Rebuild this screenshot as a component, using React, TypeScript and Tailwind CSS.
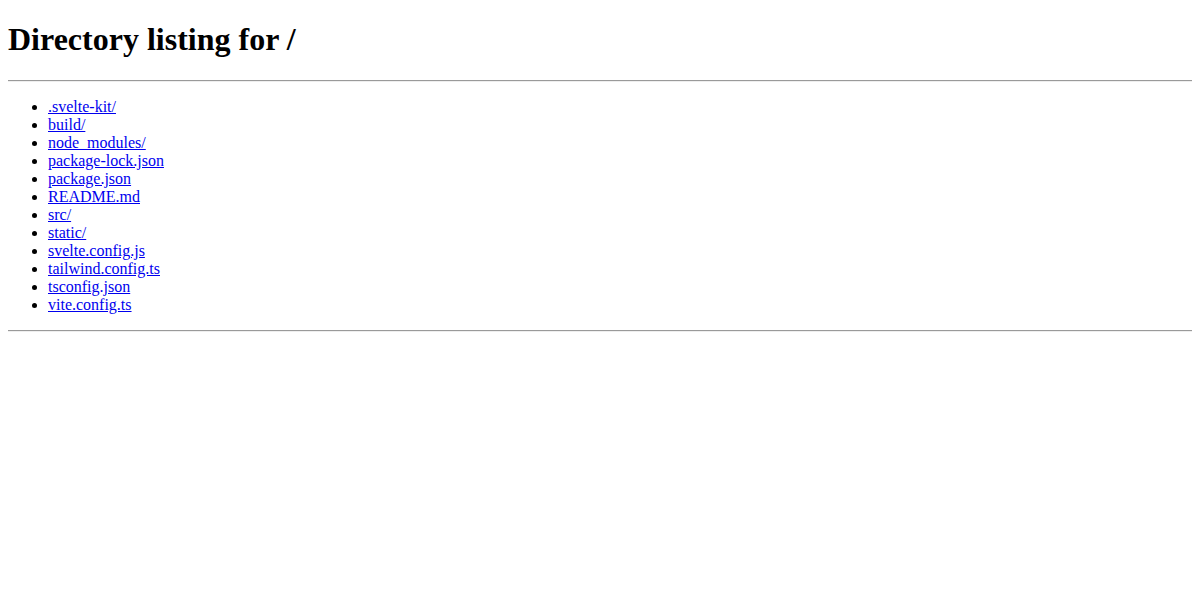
const entries = [
  ".svelte-kit/",
  "build/",
  "node_modules/",
  "package-lock.json",
  "package.json",
  "README.md",
  "src/",
  "static/",
  "svelte.config.js",
  "tailwind.config.ts",
  "tsconfig.json",
  "vite.config.ts",
];

export default function App() {
  return (
    <div className="min-h-[600px] bg-white px-2 pt-[21px] text-black font-['Liberation_Serif','Times_New_Roman',serif] text-[16px]">
      <h1 className="text-[32px] font-bold leading-[37px]">Directory listing for /</h1>
      <hr className="mt-[22px] border-t border-b border-t-[#9a9a9a] border-b-[#eeeeee]" />
      <ul className="my-4 list-disc pl-10">
        {entries.map((name) => (
          <li key={name} className="leading-[18px]">
            <a href="#" className="text-[#0000ee] underline">
              {name}
            </a>
          </li>
        ))}
      </ul>
      <hr className="border-t border-b border-t-[#9a9a9a] border-b-[#eeeeee]" />
    </div>
  );
}
